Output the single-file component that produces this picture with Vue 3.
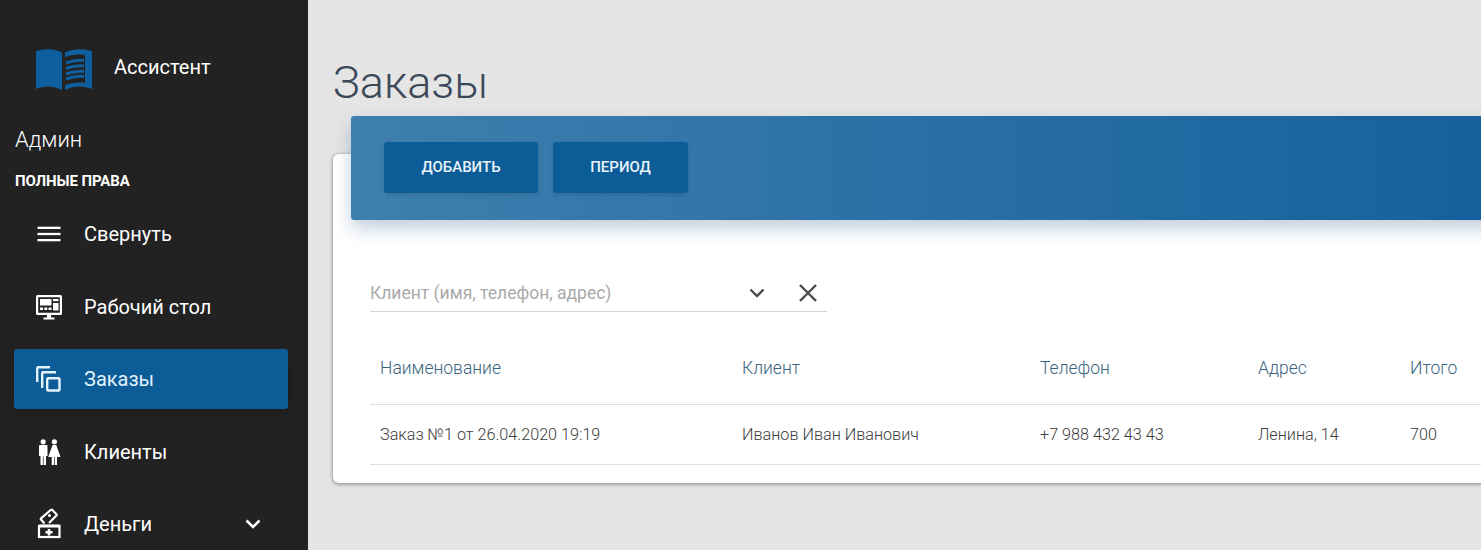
<script setup>
const menu = [
  { label: 'Свернуть', icon: 'menu' },
  { label: 'Рабочий стол', icon: 'desk' },
  { label: 'Заказы', icon: 'orders', active: true },
  { label: 'Клиенты', icon: 'people' },
  { label: 'Деньги', icon: 'money', arrow: true }
]

const columns = ['Наименование', 'Клиент', 'Телефон', 'Адрес', 'Итого']
const rows = [
  ['Заказ №1 от 26.04.2020 19:19', 'Иванов Иван Иванович', '+7 988 432 43 43', 'Ленина, 14', '700']
]
</script>

<template>
  <div class="layout">
    <aside class="sidebar">
      <div class="brand">
        <svg class="brand-logo" viewBox="0 0 56 42" width="56" height="42">
          <path fill="#0f5f9e" d="M0 3.500C8 .5 17 .5 26 4.500V42C17 37.500 8 37.500 0 41Z" />
          <path fill="#0f5f9e" d="M29 4.500C38 .5 48 .5 56 3.500V41C48 37.500 38 37.500 29 42Z" />
          <path fill="#222" d="M29 9.500C35 6.500 42 6 49 7V35C42 34 35 34.500 29 37.500Z" />
          <g fill="none" stroke="#0f5f9e" stroke-width="3">
            <path d="M30 15c5-2 12-3 18-2.500" />
            <path d="M30 20.500c5-2 12-3 18-2.500" />
            <path d="M30 26c5-2 12-3 18-2.500" />
            <path d="M30 31c5-2 12-3 18-2.500" />
          </g>
        </svg>
        <span class="brand-name">Ассистент</span>
      </div>
      <div class="user-name">Админ</div>
      <div class="user-role">ПОЛНЫЕ ПРАВА</div>
      <nav class="nav">
        <a v-for="item in menu" :key="item.label" :class="['nav-item', { active: item.active }]">
          <svg class="nav-icon" viewBox="0 0 26 26" width="26" height="26">
            <g v-if="item.icon === 'menu'" fill="currentColor">
              <rect x="1.500" y="5.700" width="23" height="2.300" />
              <rect x="1.500" y="11.850" width="23" height="2.300" />
              <rect x="1.500" y="18" width="23" height="2.300" />
            </g>
            <g v-else-if="item.icon === 'desk'" fill="currentColor">
              <path fill-rule="evenodd" d="M1.500 1h23A1.500 1.500 0 0 1 26 2.500v17a1.500 1.500 0 0 1-1.500 1.500h-23A1.500 1.500 0 0 1 0 19.500v-17A1.500 1.500 0 0 1 1.500 1Zm.700 2.200v15.600h21.600V3.200Z" />
              <rect x="4" y="5" width="11.500" height="6.500" />
              <rect x="17" y="5" width="5.500" height="2.200" />
              <rect x="17" y="9" width="5.500" height="7.500" />
              <rect x="4" y="13.500" width="3" height="2.500" />
              <rect x="8.300" y="13.500" width="3" height="2.500" />
              <rect x="12.500" y="13.500" width="3" height="2.500" />
              <rect x="11" y="21" width="4" height="3" />
              <rect x="7.500" y="23.500" width="11" height="2" />
            </g>
            <g v-else-if="item.icon === 'orders'" fill="none" stroke="currentColor" stroke-width="2.400">
              <rect x="11.200" y="12.200" width="12.300" height="12.300" rx="1" />
              <path d="M1.200 16V2.200a1 1 0 0 1 1-1H14" />
              <path d="M6.200 22V7.200a1 1 0 0 1 1-1H20" />
            </g>
            <g v-else-if="item.icon === 'people'" fill="currentColor">
              <circle cx="7.200" cy="2.800" r="2.600" />
              <circle cx="18.400" cy="2.800" r="2.600" />
              <path d="M3 7a1 1 0 0 1 1-1h6.500a1 1 0 0 1 1 1v10h-1.500v9H7.600v-8.500h-.7V26H4.500v-9H3Z" />
              <path d="M16.500 6h3.800L24.500 18h-3.500v8h-2.300v-8h-.7v8h-2.300v-8h-3.500Z" />
            </g>
            <g v-else-if="item.icon === 'money'" fill="none" stroke="currentColor" stroke-width="2.200">
              <rect x="3" y="15" width="20.500" height="11" />
              <path d="M3 15h20.500" stroke-width="3" />
              <path d="M13 18v6.500M9.500 21.200h7" stroke-width="2.600" />
              <path d="M8.500 12.500L5 8.500a.8.800 0 0 1 0-1.100L15 -1.200a.8.800 0 0 1 1.100 0L20.500 3.300a.8.800 0 0 1 0 1.100L13 12" />
              <circle cx="13.500" cy="4.500" r="1.500" fill="currentColor" stroke="none" />
            </g>
          </svg>
          <span class="nav-label">{{ item.label }}</span>
          <svg v-if="item.arrow" class="nav-arrow" viewBox="0 0 16 12" width="16" height="12">
            <path d="M1.500 2.500L8 9l6.500-6.500" fill="none" stroke="currentColor" stroke-width="2.600" />
          </svg>
        </a>
      </nav>
    </aside>

    <main class="content">
      <h1 class="page-title">Заказы</h1>
      <section class="card">
        <div class="card-header">
          <button class="btn btn-add">ДОБАВИТЬ</button>
          <button class="btn btn-period">ПЕРИОД</button>
        </div>
        <div class="card-body">
          <div class="filter">
            <span class="filter-text">Клиент (имя, телефон, адрес)</span>
            <svg class="filter-arrow" viewBox="0 0 16 10" width="16" height="10">
              <path d="M1.500 1.500L8 8l6.500-6.500" fill="none" stroke="#4a4a4a" stroke-width="2.400" />
            </svg>
            <svg class="filter-clear" viewBox="0 0 18 18" width="18" height="18">
              <path d="M1 1l16 16M17 1L1 17" fill="none" stroke="#4a4a4a" stroke-width="2.400" />
            </svg>
          </div>
          <div class="table">
            <div class="table-row table-head">
              <div v-for="col in columns" :key="col" class="cell">{{ col }}</div>
            </div>
            <div v-for="(row, i) in rows" :key="i" class="table-row table-data">
              <div v-for="(val, j) in row" :key="j" class="cell">{{ val }}</div>
            </div>
          </div>
        </div>
      </section>
    </main>
  </div>
</template>

<style>
html, body {
  margin: 0;
  overflow: hidden;
}
</style>

<style scoped>
.layout {
  display: flex;
  height: 550px;
  overflow: hidden;
  font-family: Roboto, "Liberation Sans", sans-serif;
  background: #e5e5e5;
}

/* sidebar */
.sidebar {
  flex: 0 0 308px;
  box-sizing: border-box;
  background: #222222;
  color: #fff;
  overflow: hidden;
  padding: 48px 0 0 15px;
}

.brand {
  display: flex;
  align-items: center;
  padding-left: 21px;
  height: 42px;
}

.brand-logo {
  flex: none;
  margin-right: 22px;
}

.brand-name {
  font-size: 20px;
  position: relative;
  top: -2px;
}

.user-name {
  margin-top: 36px;
  font-size: 22px;
  font-weight: 300;
  line-height: 28px;
}

.user-role {
  margin-top: 19px;
  font-size: 15px;
  font-weight: 700;
  line-height: 16px;
  letter-spacing: -0.1px;
}

.nav {
  display: flex;
  flex-direction: column;
  gap: 12.500px;
  margin: 15px 20px 0 -1px;
}

.nav-item {
  flex: none;
  display: flex;
  align-items: center;
  height: 60px;
  padding: 0 27px 0 22px;
  border-radius: 3px;
  color: #fff;
}

.nav-item.active {
  background: #0b5c97;
  color: #e3f2fb;
  box-shadow: 0 4px 12px rgba(0, 0, 0, 0.2);
}

.nav-icon {
  flex: none;
  margin-right: 22px;
  overflow: visible;
}

.nav-label {
  flex: 1;
  font-size: 20px;
}

.nav-arrow {
  flex: none;
}

/* main */
.content {
  flex: 1;
  min-width: 0;
  padding: 0 0 0 25px;
}

.page-title {
  margin: 54px 0 0;
  font-size: 45px;
  font-weight: 300;
  line-height: 58px;
  color: #3c4858;
}

.card {
  width: 1300px;
  height: 329px;
  margin-top: 42px;
  background: #fff;
  border-radius: 6px;
  box-shadow: 0 1px 4px rgba(0, 0, 0, 0.45);
}

.card-header {
  position: relative;
  top: -38px;
  display: flex;
  gap: 15px;
  box-sizing: border-box;
  width: 1200px;
  height: 104px;
  margin-left: 18px;
  padding: 26px 33px;
  border-radius: 3px;
  background: linear-gradient(to right, #3f7fae, #135f9c);
  box-shadow: 0 8px 18px rgba(30, 80, 130, 0.28);
}

.btn {
  height: 51px;
  padding: 0 0 2px;
  border: none;
  border-radius: 3px;
  background: #0b5c97;
  color: #e8f3fa;
  font-family: inherit;
  font-size: 15px;
  font-weight: 500;
  box-shadow: 0 2px 4px rgba(0, 0, 0, 0.12);
}

.btn-add {
  width: 154px;
}

.btn-period {
  width: 135px;
}

.card-body {
  margin-top: -38px;
  padding: 0 0 0 37px;
}

.filter {
  display: flex;
  align-items: center;
  box-sizing: border-box;
  width: 457px;
  height: 44px;
  margin-top: 48px;
  padding-top: 6px;
  border-bottom: 1px solid #d2d2d2;
}

.filter-text {
  flex: 1;
  font-size: 17.500px;
  color: #aaaaaa;
}

.filter-arrow {
  margin-right: 34px;
}

.filter-clear {
  margin-right: 10px;
}

.table {
  margin-top: 33px;
}

.table-row {
  display: grid;
  grid-template-columns: 362px 298px 218px 152px 1fr;
  align-items: center;
  border-bottom: 1px solid #dddddd;
}

.table-head {
  height: 46px;
  padding-bottom: 13px;
  color: #3a6580;
  font-size: 17.500px;
  font-weight: 300;
}

.table-data {
  height: 59px;
  color: #3c3c3c;
  font-size: 16.200px;
  font-weight: 300;
}

.cell {
  padding-left: 10px;
}
</style>
